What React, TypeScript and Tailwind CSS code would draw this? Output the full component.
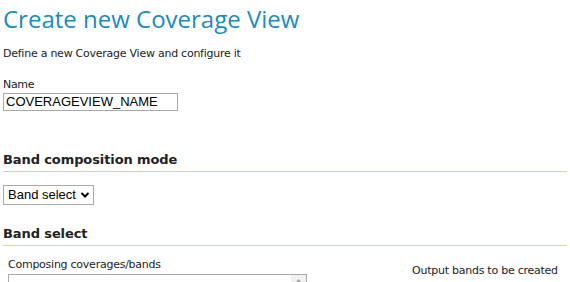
export default function App() {
  const body = { fontFamily: '"DejaVu Sans", Verdana, sans-serif' };
  return (
    <div className="w-[570px] h-[282px] overflow-hidden bg-white px-[3px] text-[#222]" style={body}>
      <h1 className="pt-[3px] text-[24px] leading-[32px] text-[#1b8bc0] font-['Open_Sans',sans-serif]">
        Create new Coverage View
      </h1>
      <p className="mt-[12px] text-[11px] leading-[14px] tracking-[-0.25px]">Define a new Coverage View and configure it</p>

      <div className="mt-[17px]">
        <label className="block text-[11px] leading-[13px] tracking-[-0.3px]">Name</label>
        <input
          readOnly
          value="COVERAGEVIEW_NAME"
          className="mt-[2px] block h-[18px] w-[175px] border border-[#a9a9a9] px-[2px] text-[13px] text-black font-['Liberation_Sans',Arial,sans-serif] outline-none"
        />
      </div>

      <h2 className="mt-[40px] border-b border-[#c6e0a0] pb-[3px] text-[13px] font-bold leading-[17px] tracking-[-0.1px]">
        Band composition mode
      </h2>
      <div className="mt-[13px] inline-flex h-[20px] items-center gap-[4px] border border-[#a9a9a9] pl-[4px] pr-[3px] text-[13px] text-black font-['Liberation_Sans',Arial,sans-serif]">
        <span>Band select</span>
        <svg width="10" height="8" viewBox="0 0 10 8">
          <path d="M1.5 2 L5 5.5 L8.5 2" fill="none" stroke="black" strokeWidth="2" />
        </svg>
      </div>

      <h2 className="mt-[19px] border-b border-[#c6e0a0] pb-[3px] text-[13px] font-bold leading-[17px] tracking-[-0.1px]">
        Band select
      </h2>
      <div className="mt-[12px] flex">
        <div className="w-[300px] pl-[5px]">
          <div className="text-[11px] leading-[14px] tracking-[-0.25px]">Composing coverages/bands</div>
          <div className="relative mt-[2px] h-[40px] w-[299px] border border-[#a9a9a9]">
            <div className="absolute right-0 top-0 h-full w-[15px] bg-[#f1f1f1]">
              <svg width="15" height="10" viewBox="0 0 15 10" className="block">
                <path d="M5 7 L7.5 4 L10 7 Z" fill="#a3a3a3" />
              </svg>
            </div>
          </div>
        </div>
        <div className="ml-[109px] pt-[6px] text-[11px] leading-[14px] tracking-[-0.25px]">Output bands to be created</div>
      </div>
    </div>
  );
}
